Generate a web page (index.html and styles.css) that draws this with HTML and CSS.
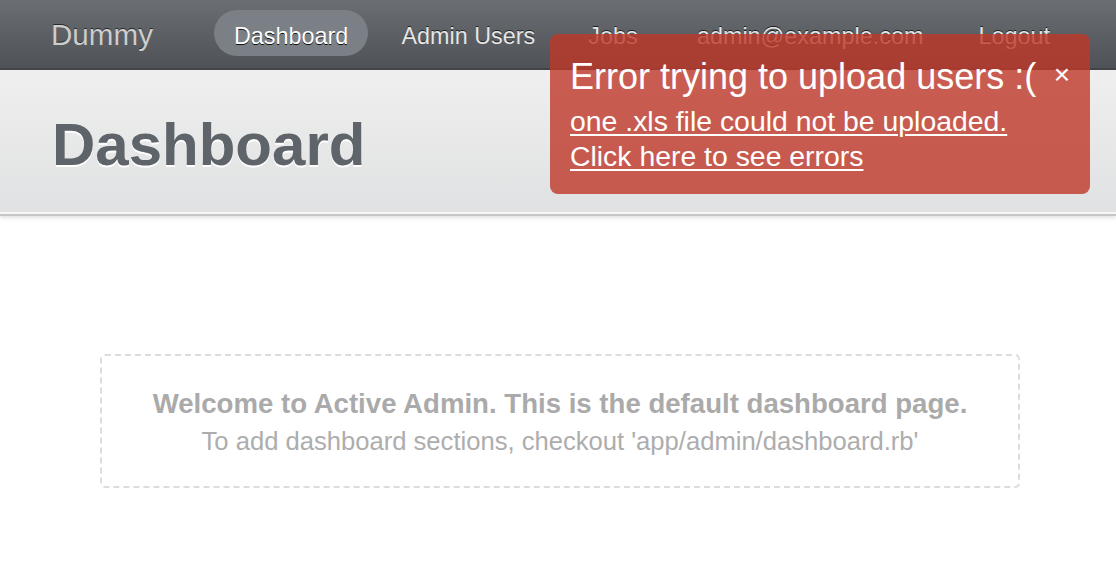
FILE: index.html
```html
<!DOCTYPE html>
<html lang="en">
<head>
<meta charset="utf-8">
<title>Dashboard | Dummy</title>
<link rel="stylesheet" href="styles.css">
</head>
<body>
<div class="page">
  <header class="header">
    <h1 class="site-title">Dummy</h1>
    <ul class="tabs">
      <li class="tab current"><a href="#">Dashboard</a></li>
      <li class="tab"><a href="#">Admin Users</a></li>
      <li class="tab"><a href="#">Jobs</a></li>
    </ul>
    <ul class="utility-nav">
      <li class="tab"><a href="#">admin@example.com</a></li>
      <li class="tab"><a href="#">Logout</a></li>
    </ul>
  </header>
  <div class="title-bar">
    <h2 class="page-title">Dashboard</h2>
  </div>
  <main class="content">
    <div class="blank-slate">
      <div class="blank-title">Welcome to Active Admin. This is the default dashboard page.</div>
      <div class="blank-sub">To add dashboard sections, checkout 'app/admin/dashboard.rb'</div>
    </div>
  </main>
  <div class="flash flash-error">
    <div class="flash-title">Error trying to upload users :(</div>
    <a class="flash-link" href="#">one .xls file could not be uploaded.</a><br>
    <a class="flash-link" href="#">Click here to see errors</a>
    <span class="flash-close">×</span>
  </div>
</div>
</body>
</html>
```
FILE: styles.css
```css
* { box-sizing: border-box; }
html, body { margin: 0; padding: 0; }
body {
  font-family: "Liberation Sans", Arial, Helvetica, sans-serif;
  background: #fff;
  width: 1116px;
  height: 576px;
  overflow: hidden;
}
.page { position: relative; height: 576px; }

.header {
  height: 70px;
  display: flex;
  align-items: center;
  padding: 0 46px 2px 51px;
  background: linear-gradient(to bottom, #6b6f73 0%, #5c6064 50%, #4f5357 100%);
  border-bottom: 2px solid #42464a;
}
.site-title {
  margin: 0 61px 0 0;
  font-size: 29.6px;
  font-weight: normal;
  color: #cdcdcd;
  text-shadow: 0 -1px 0 rgba(0,0,0,0.6);
  line-height: 1;
  position: relative;
  top: 2px;
}
.tabs, .utility-nav {
  display: flex;
  align-items: center;
  list-style: none;
  margin: 0;
  padding: 0;
}
.tabs { gap: 13px; }
.utility-nav { margin-left: auto; gap: 15px; }
.tab a {
  display: block;
  height: 46px;
  line-height: 39px;
  padding: 7px 20px 0;
  border-radius: 23px;
  font-size: 23.4px;
  color: #e6e6e6;
  text-decoration: none;
  text-shadow: 0 -1px 0 rgba(0,0,0,0.7);
}
.tab.current a {
  background: #7a8086;
  color: #fff;
  text-shadow: 0 1px 0 rgba(0,0,0,0.9);
}

.title-bar {
  height: 146px;
  padding: 40px 48px 0 52px;
  background: linear-gradient(to bottom, #efefef 0%, #e0e1e2 100%);
  border-bottom: 2px solid #c6c6c6;
  box-shadow: inset 0 -2px 0 #f6f6f6, 0 2px 4px rgba(0,0,0,0.12);
  position: relative;
}
.page-title {
  margin: 0;
  font-size: 60px;
  font-weight: bold;
  line-height: 69px;
  color: #5e6469;
  text-shadow: 0 2px 0 #fff;
}

.content {
  padding: 138px 96px 0 100px;
}
.blank-slate {
  border: 2px dashed #dcdcdc;
  border-radius: 5px;
  padding: 30px 10px 25px;
  text-align: center;
}
.blank-title {
  font-size: 27.6px;
  font-weight: bold;
  line-height: 36px;
  color: #aaaaaa;
}
.blank-sub {
  font-size: 25.6px;
  line-height: 39px;
  color: #adadad;
}

.flash {
  position: absolute;
  top: 34px;
  left: 550px;
  width: 540px;
  height: 160px;
  padding: 23px 20px 0 20px;
  border-radius: 8px;
  background: rgba(191, 55, 40, 0.8);
  color: #fff;
}
.flash-title {
  font-size: 36px;
  line-height: 40px;
  margin-bottom: 7px;
}
.flash-link {
  font-size: 28.4px;
  line-height: 35px;
  color: #fff;
  text-decoration: underline;
  text-underline-offset: 3px;
  text-decoration-thickness: 2px;
}
.flash-close {
  position: absolute;
  top: 23px;
  right: 20px;
  font-size: 28px;
  line-height: 36px;
  color: #fff;
}
```
